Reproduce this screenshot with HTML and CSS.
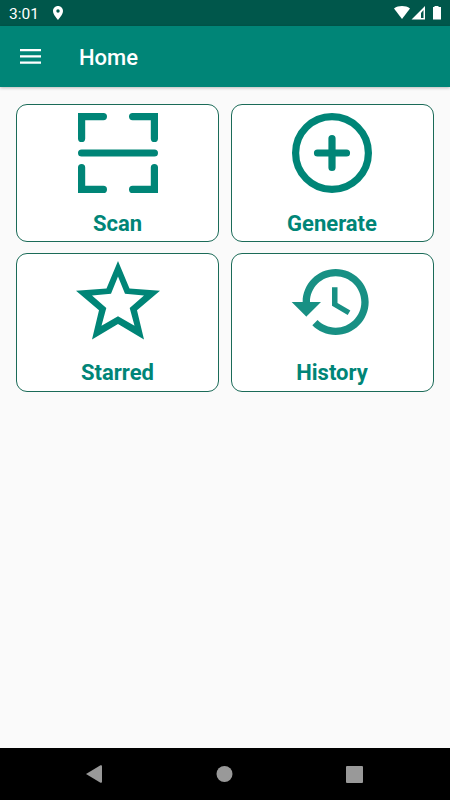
FILE: index.html
```html
<!DOCTYPE html>
<html lang="en">
<head>
	<meta charset="utf-8">
	<title>Home</title>
	<link rel="stylesheet" href="styles.css">
</head>
<body>
	<div class="status-bar">
		<span class="time">3:01</span>
		<svg class="pin" width="10" height="14" viewBox="0 0 10 14"><path fill-rule="evenodd" d="M5 0C2.200 0 0 2.200 0 5c0 3.600 5 9 5 9s5-5.400 5-9c0-2.800-2.200-5-5-5zm0 3.300a1.700 1.700 0 1 1 0 3.400 1.700 1.700 0 0 1 0-3.400z"/></svg>
		<svg class="signals" width="48" height="16" viewBox="0 0 48 16">
			<path d="M0 3.500C4.500 .3 11.500 .3 16 3.500L8 14z"/>
			<path fill-rule="evenodd" d="M31 1v13.500H17.500zM29.500 5l-2.500 3V13h2.500z"/>
			<path d="M40.500 1h4v1h2.500v12.500h-8V2h1.500z"/>
		</svg>
	</div>
	<header class="app-bar">
		<svg class="menu" width="21" height="15" viewBox="0 0 21 15"><path d="M0 0h21v2.300H0zM0 6.200h21v2.300H0zM0 12.400h21v2.300H0z"/></svg>
		<h1>Home</h1>
	</header>
	<main class="grid">
		<div class="card">
			<svg class="icon line" viewBox="0 0 88 88"><path d="M7.600 29.400V7.600h21.800M58.600 7.600h21.800v21.800M7.600 58.600v21.800h21.800M58.600 80.400h21.800V58.600M7.600 44h72.800"/></svg>
			<span>Scan</span>
		</div>
		<div class="card">
			<svg class="icon line" viewBox="0 0 88 88"><circle cx="44" cy="44" r="36.400"/><path d="M29.500 44h29M44 29.500v29"/></svg>
			<span>Generate</span>
		</div>
		<div class="card">
			<svg class="icon" viewBox="0 0 88 88"><path fill-rule="evenodd" d="M44 3L55.500 30.500 86 32.800 63 52.200 70 81.400 44 66 18 81.400 25 52.200 2 32.800 32.500 30.500zM44 18.500L37 35.800 18 37.500 32.300 50 27.500 67.700 44 58.200 60.500 67.700 55.700 50 70 37.500 51 35.800z"/></svg>
			<span>Starred</span>
		</div>
		<div class="card">
			<svg class="icon faded" viewBox="0 0 24 24"><path d="M13 3c-4.970 0-9 4.030-9 9H1l3.890 3.890.07.14L9 12H6c0-3.870 3.130-7 7-7s7 3.130 7 7-3.130 7-7 7c-1.930 0-3.680-.79-4.940-2.060l-1.420 1.420C8.270 19.990 10.510 21 13 21c4.970 0 9-4.030 9-9s-4.030-9-9-9zm-1 5v5l4.280 2.540.72-1.210-3.500-2.080V8H12z"/></svg>
			<span>History</span>
		</div>
	</main>
	<nav class="nav-bar">
		<svg width="16" height="18" viewBox="0 0 16 18"><path d="M0 9L14.500 .3q1.500-.5 1.500 1v15.400q0 1.500-1.500 1z"/></svg>
		<svg width="18" height="16" viewBox="0 0 18 16"><circle cx="9.500" cy="8" r="8"/></svg>
		<svg width="17" height="17" viewBox="0 0 17 17"><rect width="17" height="17" rx="1"/></svg>
	</nav>
</body>
</html>
```

FILE: styles.css
```css
* {
	box-sizing: border-box;
}

body {
	margin: 0;
	height: 100vh;
	display: flex;
	flex-direction: column;
	font-family: Roboto, sans-serif;
	background-color: #fafafa;
	overflow: hidden;
}

svg {
	display: block;
	flex: none;
}

.status-bar {
	height: 26px;
	display: flex;
	align-items: center;
	padding: 0 8px 0 9px;
	background-color: #00574b;
	color: #fff;
	fill: #fff;
}

.time {
	width: 44px;
	padding-top: 2px;
	font-size: 15.500px;
	line-height: 20px;
}

.signals {
	margin-left: auto;
}

.app-bar {
	height: 61px;
	display: flex;
	align-items: center;
	padding-left: 20px;
	background-color: #008577;
	color: #fff;
	fill: #fff;
	box-shadow: 0 1px 3px rgba(0, 0, 0, 0.25);
}

.app-bar h1 {
	margin: 2px 0 0 38px;
	font-size: 22px;
	font-weight: 500;
	line-height: 26px;
}

.grid {
	flex: 1;
	display: grid;
	grid-template-columns: 203px 203px;
	grid-auto-rows: 138.200px;
	align-content: start;
	gap: 11.200px 11.500px;
	padding: 17px 16px 0;
}

.card {
	display: flex;
	flex-direction: column;
	align-items: center;
	padding-top: 4px;
	background-color: #fff;
	border: 1px solid #1b6b58;
	border-radius: 11px;
	color: #008577;
	font-size: 22px;
	font-weight: 700;
	line-height: 26px;
}

.card span {
	margin-top: 14px;
}

.icon {
	width: 88px;
	height: 88px;
	fill: #008577;
}

.line {
	fill: none;
	stroke: #008577;
	stroke-width: 7.200;
	stroke-linecap: round;
}

.faded {
	opacity: 0.9;
}

.nav-bar {
	height: 52px;
	display: flex;
	justify-content: space-between;
	align-items: center;
	padding: 0 87px 0 86px;
	background-color: #000;
	fill: #999;
}
```
